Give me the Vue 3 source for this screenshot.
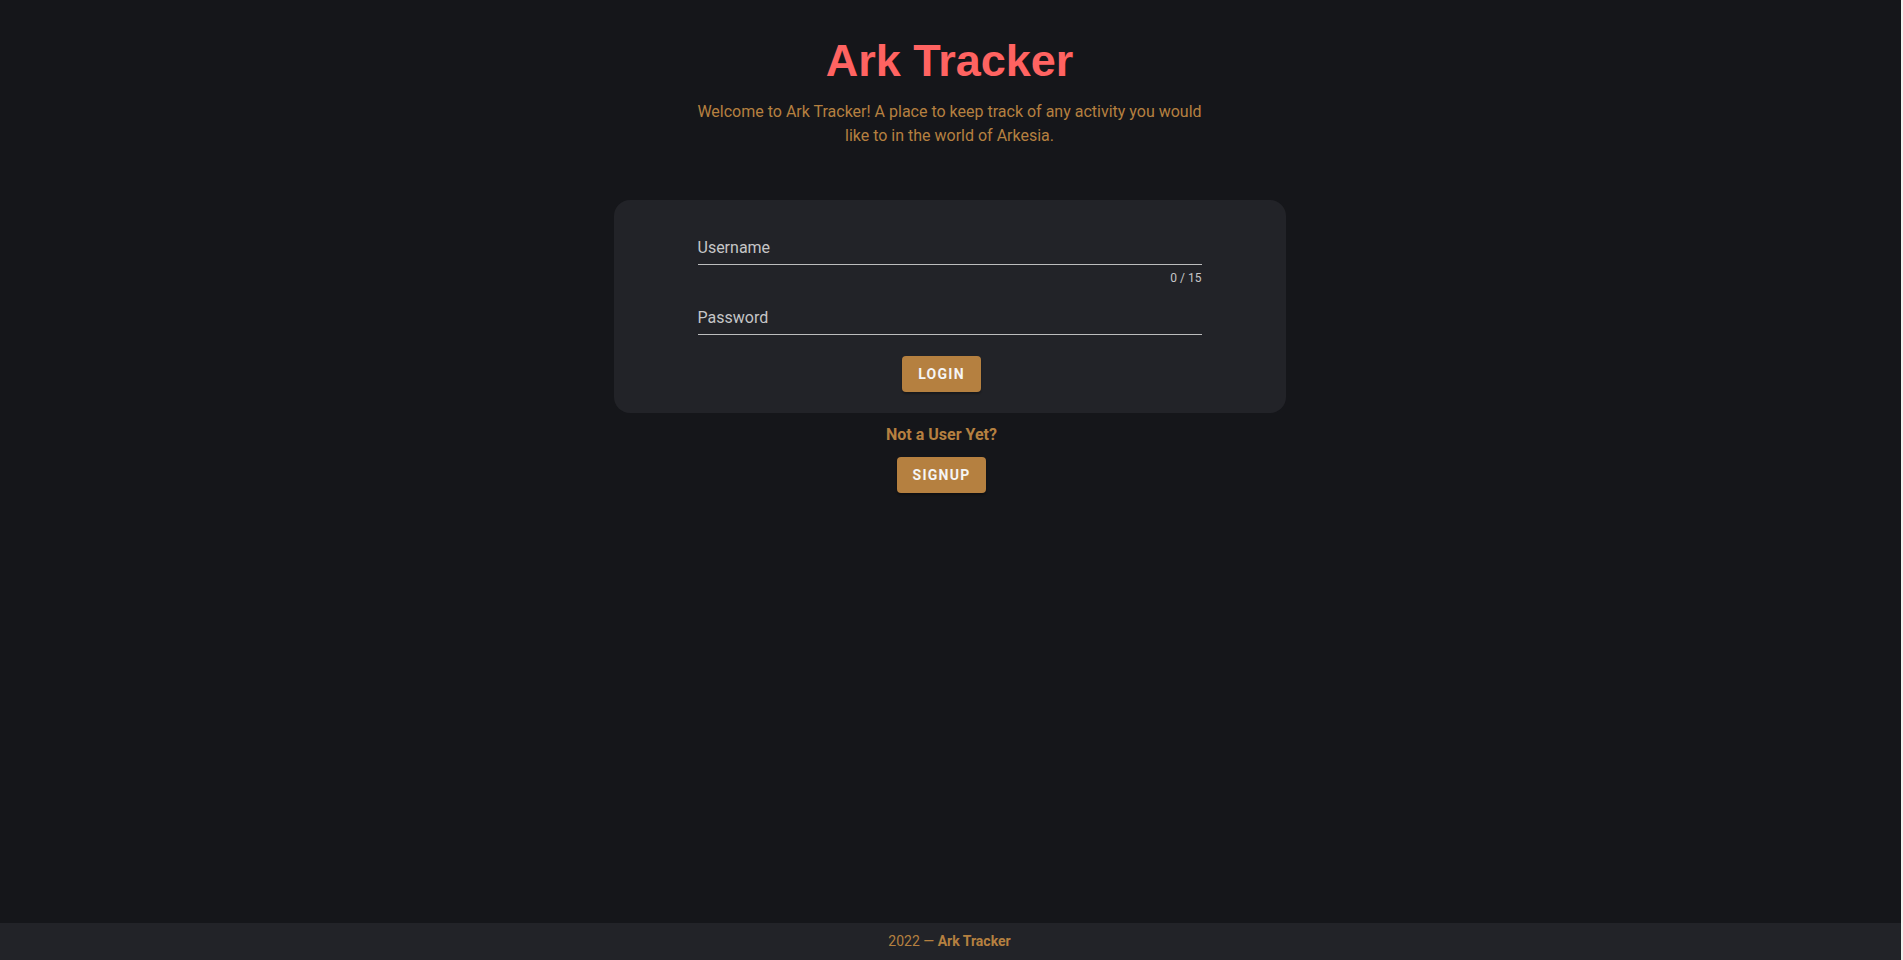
<script setup>
import { ref } from 'vue'

const username = ref('')
const password = ref('')
const limit = 15
</script>

<template>
  <div class="app">
    <main class="main">
      <header class="intro">
        <h1 class="title">Ark Tracker</h1>
        <p class="welcome">
          Welcome to Ark Tracker! A place to keep track of any activity you would like to in the world of Arkesia.
        </p>
      </header>

      <form class="card" @submit.prevent>
        <div class="field">
          <label for="username" :class="{ raised: username }">Username</label>
          <input id="username" v-model="username" type="text" :maxlength="limit" autocomplete="username" />
        </div>
        <div class="counter">{{ username.length }} / {{ limit }}</div>
        <div class="field">
          <label for="password" :class="{ raised: password }">Password</label>
          <input id="password" v-model="password" type="password" autocomplete="current-password" />
        </div>
        <button class="btn" type="submit">Login</button>
      </form>

      <section class="signup">
        <p class="question">Not a User Yet?</p>
        <button class="btn" type="button">Signup</button>
      </section>
    </main>

    <footer class="footer">
      <span>2022 — <strong>Ark Tracker</strong></span>
    </footer>
  </div>
</template>

<style>
body {
  background: #15161a;
}
</style>

<style scoped>
.app {
  box-sizing: border-box;
  min-height: 100vh;
  display: flex;
  flex-direction: column;
  border-right: 2px solid #f1f1ee;
  background: #15161a;
  color: #b58040;
  font-family: Roboto, "Liberation Sans", sans-serif;
  font-size: 16px;
  line-height: 24px;
}

.main {
  flex: 1;
  display: flex;
  flex-direction: column;
  align-items: center;
  padding: 36px 18px 0 16px;
}

.intro {
  width: 100%;
  max-width: 512px;
  text-align: center;
}

.title {
  margin: 0 0 15px;
  color: #ff6361;
  font-family: "Franklin Gothic Medium", "Liberation Sans", Arial, sans-serif;
  font-size: 45px;
  font-weight: 700;
  line-height: 49px;
}

.welcome {
  margin: 0;
}

.card {
  box-sizing: border-box;
  width: 100%;
  max-width: 672px;
  margin-top: 52px;
  padding: 32px 84px 21px;
  display: flex;
  flex-direction: column;
  align-items: center;
  border-radius: 16px;
  background: #222328;
}

.field {
  position: relative;
  width: 100%;
}

.field label {
  position: absolute;
  top: 4px;
  left: 0;
  color: #c6c6c7;
  pointer-events: none;
}

.field label.raised {
  top: -12px;
  font-size: 12px;
}

.field input {
  box-sizing: border-box;
  display: block;
  width: 100%;
  height: 33px;
  padding: 4px 0;
  border: 0;
  border-bottom: 1px solid #bdbdbe;
  border-radius: 0;
  outline: 0;
  background: transparent;
  color: #ffffff;
  font: inherit;
}

.counter {
  align-self: flex-end;
  margin: 7px 0 18px;
  color: #c6c6c7;
  font-size: 12px;
  line-height: 12px;
}

.btn {
  height: 36px;
  margin: 0 16px 0 0;
  padding: 0 16px;
  border: 0;
  border-radius: 4px;
  background: #b58040;
  box-shadow: 0 2px 2px rgba(0, 0, 0, 0.3);
  color: #f5f5f5;
  font-family: inherit;
  font-size: 14px;
  font-weight: 700;
  letter-spacing: 0.09em;
  text-transform: uppercase;
  cursor: pointer;
}

.card .btn {
  margin-top: 21px;
}

.signup {
  display: flex;
  flex-direction: column;
  align-items: center;
  padding-top: 10px;
}

.question {
  margin: 0 16px 10px 0;
  font-weight: 700;
}

.footer {
  display: flex;
  justify-content: center;
  padding: 6px 18px 7px 16px;
  background: #222328;
  font-size: 14px;
}
</style>
